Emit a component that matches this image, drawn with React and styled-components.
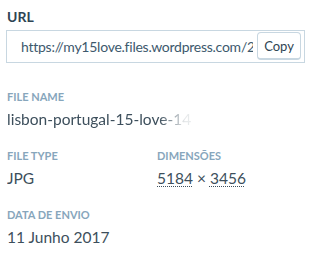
import React from "react";
import styled, { createGlobalStyle } from "styled-components";

const Global = createGlobalStyle`
  html, body { margin: 0; padding: 0; background: #fff; }
  body { font-family: Lato, "Open Sans", sans-serif; }
`;

const Panel = styled.div`
  width: 310px;
  height: 261px;
  box-sizing: border-box;
  padding: 9px 5px 0 6px;
  display: flex;
  flex-direction: column;
`;

const UrlLabel = styled.div`
  font-size: 14px;
  font-weight: 700;
  color: #2e4453;
  line-height: 16px;
  padding-left: 1px;
  margin-bottom: 5px;
`;

const InputWrap = styled.div`
  height: 33px;
  box-sizing: border-box;
  border: 1px solid #c8d7e1;
  margin-bottom: 27px;
  display: flex;
  align-items: center;
  gap: 4px;
  padding: 0 3px 0 14px;
`;

const UrlText = styled.span`
  flex: 1;
  min-width: 0;
  overflow: hidden;
  white-space: nowrap;
  font-size: 14px;
  letter-spacing: -0.25px;
  color: #3d596d;
`;

const CopyButton = styled.button`
  flex: none;
  align-self: flex-start;
  margin-top: 1px;
  width: 44px;
  height: 28px;
  box-sizing: border-box;
  border: 1px solid #c8d7e1;
  border-bottom-width: 2px;
  border-radius: 4px;
  background: #fff;
  color: #2e4453;
  font-family: inherit;
  font-size: 13px;
  font-weight: 400;
  padding: 0;
`;

const Grid = styled.div`
  display: grid;
  grid-template-columns: 150px 1fr;
  row-gap: 20px;
  padding-left: 1px;
`;

const Field = styled.div`
  grid-column: ${(p) => (p.$full ? "1 / span 2" : "auto")};
  display: flex;
  flex-direction: column;
`;

const Label = styled.div`
  font-size: 11px;
  font-weight: 700;
  text-transform: uppercase;
  color: #87a6bc;
  line-height: 14px;
  margin-bottom: 5px;
`;

const Value = styled.div`
  font-size: 15.5px;
  color: #3d4f5c;
  line-height: 20px;
  white-space: nowrap;
  overflow: hidden;
`;

const Fade = styled.div`
  width: 185px;
  overflow: hidden;
  white-space: nowrap;
  -webkit-mask-image: linear-gradient(to right, #000 152px, rgba(0,0,0,0.12) 178px);
  mask-image: linear-gradient(to right, #000 152px, rgba(0,0,0,0.12) 178px);
`;

const Abbr = styled.abbr`
  text-decoration: underline dotted;
  text-underline-offset: 2px;
  text-decoration-thickness: 1px;
`;

export default function App() {
  return (
    <>
      <Global />
      <Panel>
        <UrlLabel>URL</UrlLabel>
        <InputWrap>
          <UrlText>https://my15love.files.wordpress.com/2017/06/lisbon-portugal-15-love-14.jpg</UrlText>
          <CopyButton>Copy</CopyButton>
        </InputWrap>
        <Grid>
          <Field $full>
            <Label>File name</Label>
            <Value>
              <Fade>lisbon-portugal-15-love-14.jpg</Fade>
            </Value>
          </Field>
          <Field>
            <Label>File type</Label>
            <Value>JPG</Value>
          </Field>
          <Field>
            <Label>Dimensões</Label>
            <Value>
              <Abbr title="5184">5184</Abbr> × <Abbr title="3456">3456</Abbr>
            </Value>
          </Field>
          <Field $full>
            <Label>Data de envio</Label>
            <Value>11 Junho 2017</Value>
          </Field>
        </Grid>
      </Panel>
    </>
  );
}
